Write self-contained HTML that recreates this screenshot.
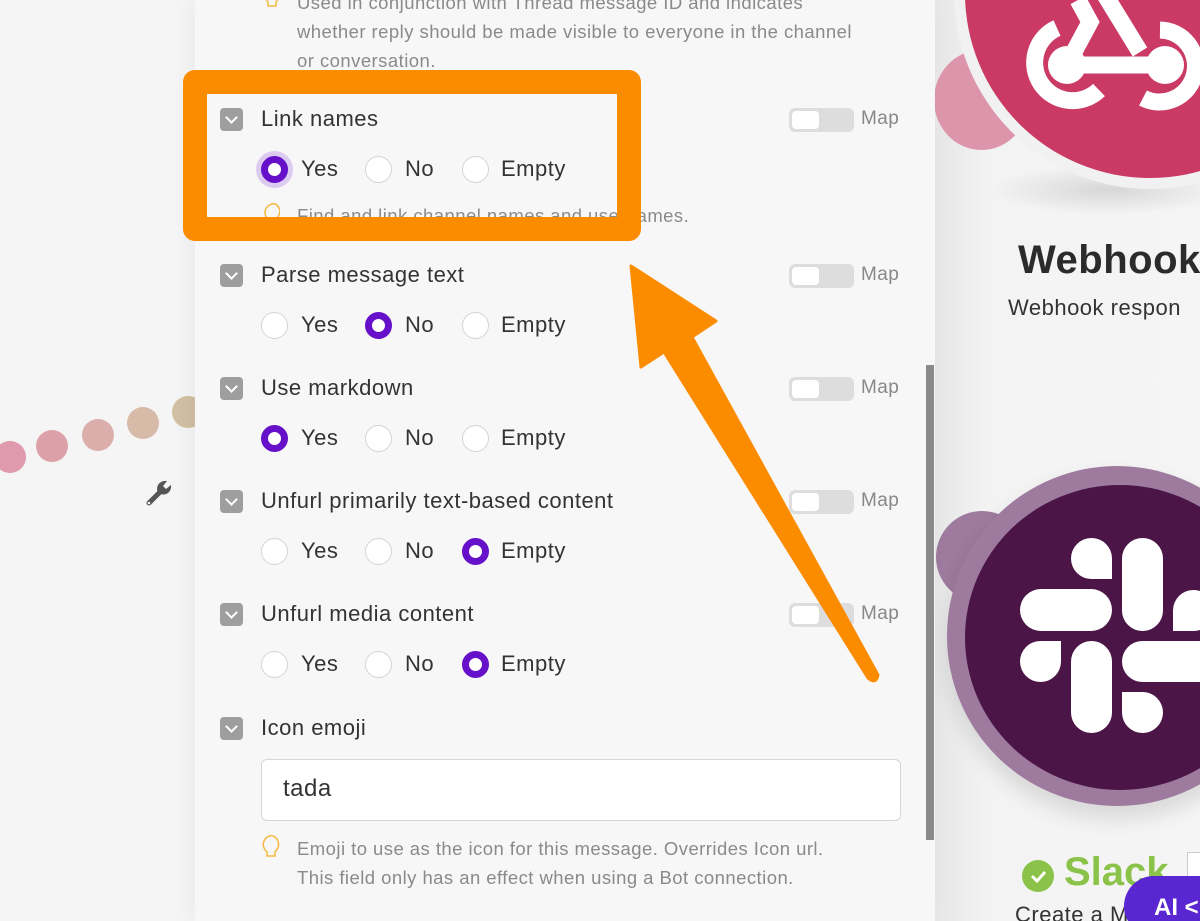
<!DOCTYPE html>
<html><head><meta charset="utf-8"><style>
*{margin:0;padding:0;box-sizing:border-box}
html{width:1200px;height:921px;overflow:hidden}
body{width:1200px;height:921px;overflow:hidden;background:#f5f5f5;font-family:"Liberation Sans",sans-serif;position:relative}
.a{position:absolute}
.panel{left:195px;top:0;width:740px;height:921px;background:#f7f7f7;box-shadow:-8px 0 20px rgba(0,0,0,.04)}
.lbl{font-size:22px;color:#333;left:261px;letter-spacing:.5px;white-space:nowrap}
.cb{left:220px;width:23px;height:23px;background:#9e9e9e;border-radius:4px}
.cb:after{content:"";position:absolute;left:7px;top:5px;width:7px;height:7px;border-right:2px solid #fff;border-bottom:2px solid #fff;transform:rotate(45deg)}
.r{width:27px;height:27px;border-radius:50%;border:1.5px solid #d4d4d4;background:#fff}
.r.on{border:7.5px solid #6610c9;background:#fff}
.rt{font-size:22px;color:#333;letter-spacing:.5px}
.tg{left:789px;width:65px;height:24px;border-radius:6px;background:#ddd}
.tg:before{content:"";position:absolute;left:3px;top:3px;width:27px;height:18px;background:#fff;border-radius:4px}
.map{left:861px;font-size:19px;color:#888;letter-spacing:.4px}
.hint{left:297px;font-size:18.5px;color:#8a8a8a;line-height:29px;letter-spacing:.45px;white-space:nowrap}
</style></head><body>
<!-- left canvas dots -->
<div class="a" style="left:-6px;top:441px;width:32px;height:32px;border-radius:50%;background:#df9aad"></div>
<div class="a" style="left:36px;top:430px;width:32px;height:32px;border-radius:50%;background:#dca1a8"></div>
<div class="a" style="left:82px;top:419px;width:32px;height:32px;border-radius:50%;background:#dcaeab"></div>
<div class="a" style="left:127px;top:407px;width:32px;height:32px;border-radius:50%;background:#d8baa9"></div>
<div class="a" style="left:172px;top:396px;width:32px;height:32px;border-radius:50%;background:#d2c0a4"></div>
<svg class="a" style="left:144px;top:477px" width="34" height="32" viewBox="0 0 34 32"><path d="M5 26 L17 14" stroke="#555" stroke-width="5" stroke-linecap="round"/><path d="M14 16 C11 9 16 3 23 4 L19 9 L22 12 L27 8 C28 15 22 19 16 17" fill="#555"/><circle cx="5" cy="26" r="1.3" fill="#f5f5f5"/></svg>

<!-- right canvas -->
<div class="a" style="left:935px;top:0;width:265px;height:921px;background:linear-gradient(90deg,#e6e6e6,#f3f3f3 20%,#f5f5f5)"></div>
<div class="a" style="left:934px;top:50px;width:95px;height:100px;border-radius:50%;background:#dc95ab"></div>
<div class="a" style="left:990px;top:165px;width:240px;height:50px;border-radius:50%;background:radial-gradient(ellipse,rgba(0,0,0,.12),rgba(0,0,0,0) 70%)"></div>
<div class="a" style="left:965px;top:-192px;width:370px;height:370px;border-radius:50%;background:#ca3a65;box-shadow:0 0 0 11px #f1f1f1"></div>
<svg class="a" style="left:960px;top:0" width="240" height="120" viewBox="0 0 240 120"><g stroke="#fff" stroke-width="17" fill="none"><path d="M97 28 A38 38 0 1 0 139 90"/><path d="M107 65 L130 22 L118 0"/><path d="M107 65 H205"/><path d="M145 -5 L180 52"/><path d="M183 98 A36 36 0 1 0 200 30"/></g><circle cx="107" cy="65" r="19" fill="#fff"/><circle cx="205" cy="65" r="19" fill="#fff"/></svg>
<div class="a" style="left:1018px;top:238px;font-size:40px;font-weight:bold;color:#2b2b2b;white-space:nowrap;letter-spacing:.5px">Webhooks</div>
<div class="a" style="left:1008px;top:295px;font-size:22px;color:#333;white-space:nowrap;letter-spacing:.5px">Webhook respon</div>

<div class="a" style="left:936px;top:511px;width:92px;height:92px;border-radius:50%;background:#9d7a9e"></div>
<div class="a" style="left:947px;top:466px;width:340px;height:340px;border-radius:50%;background:#9d7a9e;box-shadow:0 12px 22px rgba(0,0,0,.12)"></div>
<div class="a" style="left:965px;top:485px;width:310px;height:305px;border-radius:50%;background:#4b1547"></div>
<svg class="a" style="left:1020px;top:538px" width="180" height="196" viewBox="0 0 180 196"><g fill="#fff">
<path d="M92 42 H71.5 A20.5 20.5 0 1 1 92 21.5 Z" transform="translate(0,-1)"/>
<rect x="0" y="51" width="92" height="42" rx="21"/>
<rect x="102" y="0" width="41" height="93" rx="20.5"/>
<path d="M153 93 V72.5 A20.5 20.5 0 1 1 173.5 93 Z"/>
<path d="M41 103 V123.5 A20.5 20.5 0 1 1 20.5 103 Z"/>
<rect x="51" y="103" width="41" height="92" rx="20.5"/>
<rect x="102" y="103" width="100" height="41" rx="20.5"/>
<path d="M102 154 H122.5 A20.5 20.5 0 1 1 102 174.5 Z"/>
</g></svg>
<div class="a" style="left:1022px;top:860px;width:32px;height:32px;border-radius:50%;background:#8bc34a"></div>
<svg class="a" style="left:1022px;top:860px" width="32" height="32"><path d="M10 16 l5 5 l8-9" stroke="#fff" stroke-width="3" fill="none"/></svg>
<div class="a" style="left:1064px;top:850px;font-size:40px;font-weight:bold;color:#8bc34a">Slack</div>
<div class="a" style="left:1187px;top:852px;width:20px;height:40px;border:1.5px solid #ccc;background:#fff"></div>
<div class="a" style="left:1015px;top:902px;font-size:22px;color:#333;white-space:nowrap;letter-spacing:.5px">Create a M</div>
<div class="a" style="left:1124px;top:876px;width:120px;height:60px;border-radius:30px;background:#5a26d2;color:#fff;font-size:24px;font-weight:bold;padding:18px 0 0 30px">AI &lt;</div>

<!-- panel -->
<div class="a panel"></div>
<div class="a" style="left:926px;top:365px;width:8px;height:475px;background:#8a8a8a"></div>
<svg class="a" style="left:264px;top:-8px" width="16" height="20"><path d="M4 0 q-4 6 0 10 v4 h8 v-4 q4-4 0-10" stroke="#f5b842" fill="none" stroke-width="1.5"/></svg>
<div class="a hint" style="top:-12px">Used in conjunction with Thread message ID and indicates<br>whether reply should be made visible to everyone in the channel<br>or conversation.</div>

<!-- rows -->
<div class="a cb" style="top:108px"></div><div class="a lbl" style="top:106px">Link names</div>
<div class="a tg" style="top:108px"></div><div class="a map" style="top:108px">Map</div>
<div class="a" style="left:256px;top:151px;width:37px;height:37px;border-radius:50%;background:#dccbf0"></div>
<div class="a r on" style="left:261px;top:156px"></div><div class="a rt" style="left:301px;top:156px">Yes</div>
<div class="a r" style="left:365px;top:156px"></div><div class="a rt" style="left:405px;top:156px">No</div>
<div class="a r" style="left:462px;top:156px"></div><div class="a rt" style="left:501px;top:156px">Empty</div>
<svg class="a" style="left:264px;top:202px" width="16" height="24"><path d="M4 18 q-6-8 0-14 q8-6 12 4 q0 5-4 10z" stroke="#f5b842" fill="none" stroke-width="1.5"/></svg>
<div class="a hint" style="top:201px">Find and link channel names and usernames.</div>

<div class="a cb" style="top:264px"></div><div class="a lbl" style="top:262px">Parse message text</div>
<div class="a tg" style="top:264px"></div><div class="a map" style="top:264px">Map</div>
<div class="a r" style="left:261px;top:312px"></div><div class="a rt" style="left:301px;top:312px">Yes</div>
<div class="a r on" style="left:365px;top:312px"></div><div class="a rt" style="left:405px;top:312px">No</div>
<div class="a r" style="left:462px;top:312px"></div><div class="a rt" style="left:501px;top:312px">Empty</div>

<div class="a cb" style="top:377px"></div><div class="a lbl" style="top:375px">Use markdown</div>
<div class="a tg" style="top:377px"></div><div class="a map" style="top:377px">Map</div>
<div class="a r on" style="left:261px;top:425px"></div><div class="a rt" style="left:301px;top:425px">Yes</div>
<div class="a r" style="left:365px;top:425px"></div><div class="a rt" style="left:405px;top:425px">No</div>
<div class="a r" style="left:462px;top:425px"></div><div class="a rt" style="left:501px;top:425px">Empty</div>

<div class="a cb" style="top:490px"></div><div class="a lbl" style="top:488px">Unfurl primarily text-based content</div>
<div class="a tg" style="top:490px"></div><div class="a map" style="top:490px">Map</div>
<div class="a r" style="left:261px;top:538px"></div><div class="a rt" style="left:301px;top:538px">Yes</div>
<div class="a r" style="left:365px;top:538px"></div><div class="a rt" style="left:405px;top:538px">No</div>
<div class="a r on" style="left:462px;top:538px"></div><div class="a rt" style="left:501px;top:538px">Empty</div>

<div class="a cb" style="top:603px"></div><div class="a lbl" style="top:601px">Unfurl media content</div>
<div class="a tg" style="top:603px"></div><div class="a map" style="top:603px">Map</div>
<div class="a r" style="left:261px;top:651px"></div><div class="a rt" style="left:301px;top:651px">Yes</div>
<div class="a r" style="left:365px;top:651px"></div><div class="a rt" style="left:405px;top:651px">No</div>
<div class="a r on" style="left:462px;top:651px"></div><div class="a rt" style="left:501px;top:651px">Empty</div>

<div class="a cb" style="top:717px"></div><div class="a lbl" style="top:715px">Icon emoji</div>
<div class="a" style="left:261px;top:759px;width:640px;height:62px;background:#fff;border:1.5px solid #d6d6d6;border-radius:6px;font-size:24px;color:#333;padding:15px 0 0 21px;letter-spacing:.5px">tada</div>
<svg class="a" style="left:262px;top:834px" width="18" height="26"><path d="M5 18 q-7-7-1-14 q6-5 11 1 q4 7-2 13 v4 h-8z" stroke="#f5b842" fill="none" stroke-width="1.5"/></svg>
<div class="a hint" style="top:834px">Emoji to use as the icon for this message. Overrides Icon url.<br>This field only has an effect when using a Bot connection.</div>

<!-- orange annotations -->
<div class="a" style="left:183px;top:70px;width:458px;height:171px;border:24px solid #fb8c00;border-radius:12px"></div>
<svg class="a" style="left:0;top:0" width="1200" height="921"><path d="M631 266 L716 321 L692 337 L878 675 Q876 685 868 678 L664 352 L641 367 Z" fill="#fb8c00" stroke="#fb8c00" stroke-width="3" stroke-linejoin="round"/></svg>
</body></html>
